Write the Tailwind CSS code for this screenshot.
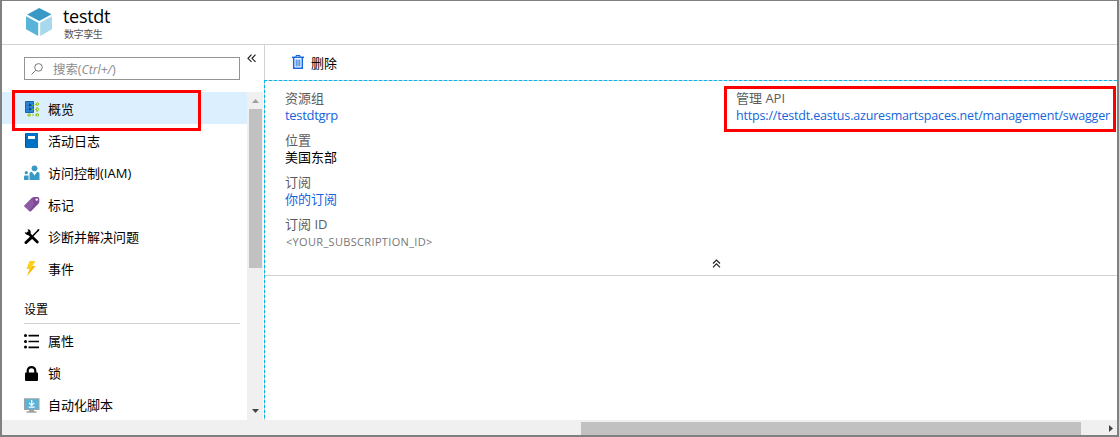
<!DOCTYPE html>
<html lang="zh-CN">
<head>
<meta charset="utf-8">
<title>testdt</title>
<script src="https://cdn.jsdelivr.net/npm/@tailwindcss/browser@4"></script>
</head>
<body class="bg-white">
<div class="relative w-[1119px] h-[437px] overflow-hidden border-2 border-t-1 border-[#808080] flex flex-col font-['Open_Sans','Noto_Sans_CJK_SC',sans-serif] text-[13px] leading-[17px] text-black whitespace-nowrap">
  <header class="h-11 shrink-0 border-b border-[#d2d2d2] flex pl-6">
    <svg class="w-[27px] h-7 mt-[7px] shrink-0" viewBox="0 0 27 28"><path fill="#3999c6" d="M13.2 0 25.500 6.200 13.200 13 1.200 6.400z"/><path fill="#59b4d9" d="M0 8.200 12.200 14.700V28L0 21.300z"/><path fill="#a8d8eb" d="M14.200 14.700 26 8.200v13.100L14.200 28z"/></svg>
    <div class="ml-[10px] pt-1">
      <div class="text-[18px] leading-[22px] tracking-[-0.3px]"><span>testdt</span></div>
      <div class="text-[10px] leading-[14px] tracking-[-0.4px] text-[#555] pl-px"><span>数字孪生</span></div>
    </div>
  </header>
  <div class="flex h-[375px] shrink-0">
    <aside class="w-[262px] shrink-0 flex flex-col">
      <div class="h-[47px] shrink-0 flex pl-[22px]">
        <div class="mt-3 w-[216px] h-[23px] border border-[#949494] flex items-center pl-[6px] text-[12.5px] text-[#8c8c8c]">
          <svg class="w-3 h-3" viewBox="0 0 12 12" fill="none" stroke="#777" stroke-width="1"><circle cx="7.500" cy="4.400" r="3.800"/><path d="M4.800 7.200.5 11.500"/></svg>
          <span class="ml-[10px] pt-px tracking-[-0.1px]">搜索(<i>Ctrl+/</i>)</span>
        </div>
        <svg class="w-[10px] h-[9px] mt-[9px] ml-[7px]" viewBox="0 0 10 9" fill="none" stroke="#222" stroke-width="1.200"><path d="M4.500.7 1 4.300l3.500 3.600M8.500.7 5 4.300l3.500 3.600"/></svg>
      </div>
      <div class="flex flex-1 min-h-0">
        <nav class="w-[245px] flex flex-col">
          <div class="h-8 shrink-0 bg-[#dceffe] flex items-center pl-[22px] gap-2 pt-[2px]">
            <svg class="w-4 h-4" viewBox="0 0 16 16"><path fill="#2a84d8" stroke="#1565b5" d="M1.500.5h8v11h-8z"/><path d="M2 4.500h7M2 8.500h7M5.500 1v10" stroke="#1d6cba" stroke-width=".8"/><path fill="#15457c" d="M5 3h2v2H5zM5 7h2v2H5z"/><g stroke="#7fba00" fill="#e4f5c0" stroke-width=".9"><path fill="none" stroke-dasharray="2 1" d="M5 14h8M13 3v11M8 4.500l5-1.500M8 8.500h5"/><circle cx="13.500" cy="3" r="1.200"/><circle cx="13.500" cy="8.500" r="1.200"/><circle cx="13.500" cy="14" r="1.200"/><circle cx="5" cy="14" r="1.200"/></g></svg>
            <span>概览</span>
          </div>
          <div class="h-8 shrink-0 flex items-center pl-[22px] gap-2 pt-[2px]">
            <svg class="w-4 h-4" viewBox="0 0 16 16"><path fill="#0072c6" d="M2 0h12v15H2q-1 0-1-1V1q0-1 1-1z"/><path fill="#005291" d="M1 1h1v13H1z"/><path fill="#fff" d="M4 3h7v3H4z"/></svg>
            <span>活动日志</span>
          </div>
          <div class="h-8 shrink-0 flex items-center pl-[22px] gap-2 pt-[2px]">
            <svg class="w-4 h-4" viewBox="0 0 16 16" fill="#3999c6"><circle cx="10.500" cy="3.300" r="2.900"/><path d="M5.500 15V8.500Q5.500 7 7 7h1l2.500 3.500L13 7h1q1.500 0 1.500 1.500V15z"/><circle cx="2.300" cy="7.700" r="1.600"/><path d="M0 15v-3.500Q0 10.500 1 10.500h3.500V15z"/></svg>
            <span>访问控制(IAM)</span>
          </div>
          <div class="h-8 shrink-0 flex items-center pl-[22px] gap-2 pt-[2px]">
            <svg class="w-4 h-4" viewBox="0 0 16 16"><path fill="#804998" d="M.4 8.500 8 .8Q9 0 10.500 0h3q1.800 0 1.800 1.800v3q0 1-.9 2L7 14.200q-.8.700-1.500 0L.400 9.500q-.5-.5 0-1z"/><path fill="#9b6cb0" d="M.4 8.500 8 .8 10 7l-5 7z" opacity=".5"/><circle cx="12.700" cy="2.600" r="1.200" fill="#fff"/></svg>
            <span>标记</span>
          </div>
          <div class="h-8 shrink-0 flex items-center pl-[22px] gap-2 pt-[2px]">
            <svg class="w-4 h-4" viewBox="0 0 16 16"><path d="M4 4 13.300 13" stroke="#000" stroke-width="2.800" stroke-linecap="round"/><path d="M3.500.3Q6.800.3 6.800 3.700 6 6.500 3.300 6 1 5.500.7 3L3 4.100 4.500 2.500z"/><path d="M14.500 1 8 7.800" stroke="#000" stroke-width="1.500"/><path d="M7 8.800 2 13.500" stroke="#000" stroke-width="3" stroke-linecap="round"/><path d="m13 1 2-1 .5.500-1 2z"/></svg>
            <span>诊断并解决问题</span>
          </div>
          <div class="h-8 shrink-0 flex items-center pl-[22px] gap-2 pt-[2px]">
            <svg class="w-4 h-4" viewBox="0 0 16 16"><path fill="#fcd116" d="M5.500 0h6L8.300 5H11.500L3 15 5.500 8H2.500z"/><path fill="#ff9f0a" d="M9 5h2.500L3 15l1.500-3.500z" opacity=".65"/></svg>
            <span>事件</span>
          </div>
          <div class="h-10 shrink-0 w-[216px] ml-[22px] border-b border-[#d0d0d0] text-[12px] leading-[17px] pt-[17px]"><span>设置</span></div>
          <div class="h-8 shrink-0 flex items-center pl-[22px] gap-2 pt-[3px]">
            <svg class="w-4 h-4" viewBox="0 0 16 16"><path stroke="#000" stroke-width="1.700" d="M4.500 1.700H15M4.500 7.500H15M4.500 13.300H15"/><circle cx="1.500" cy="1.500" r="1.500"/><circle cx="1.500" cy="7.500" r="1.500"/><circle cx="1.500" cy="13" r="1.500"/></svg>
            <span>属性</span>
          </div>
          <div class="h-8 shrink-0 flex items-center pl-[22px] gap-2 pt-[3px]">
            <svg class="w-4 h-4" viewBox="0 0 16 16"><rect x="1" y="6.500" width="13" height="8.500" rx="1"/><path d="M3.700 7V4.700a3.800 3.600 0 0 1 7.600 0V7" fill="none" stroke="#000" stroke-width="2.200"/></svg>
            <span>锁</span>
          </div>
          <div class="h-8 shrink-0 flex items-center pl-[22px] gap-2 pt-[3px]">
            <svg class="w-4 h-4" viewBox="0 0 16 16"><path fill="#a0a1a2" d="M0 .3h15.500v11.700H0zM5 12h5v1.300h2.500v1.500H2.500v-1.500H5z"/><path fill="#59b4d9" d="M1 1.300h13.500v9.700H1z"/><path d="M7.700 2v5M5.200 4.800l2.500 2.500 2.500-2.500M4.700 9.200h6" stroke="#fff" stroke-width="1.200" fill="none"/></svg>
            <span>自动化脚本</span>
          </div>
        </nav>
        <div class="w-4 bg-[#f0f0f0] flex flex-col items-center">
          <svg class="w-[7px] h-1 mt-[7px] shrink-0" viewBox="0 0 7 4"><path fill="#a0a0a0" d="M3.500 0 7 4H0z"/></svg>
          <div class="w-[13px] h-[159px] mt-[6px] bg-[#c1c1c1]"></div>
          <svg class="w-[7px] h-1 mt-auto mb-[7px] shrink-0" viewBox="0 0 7 4"><path fill="#444" d="M3.500 4 7 0H0z"/></svg>
        </div>
      </div>
    </aside>
    <main class="flex-1 min-w-0 flex flex-col">
      <div class="h-[35px] shrink-0 border-l border-[#d2d2d2] flex pl-[27px]">
        <svg class="w-3 h-[14px] mt-[10px]" viewBox="0 0 12 14" fill="none" stroke="#1667e0"><path stroke-width="1.500" d="M0 2.300h12"/><path d="M4 2V.5h4V2"/><path stroke-width="1.500" d="M1.700 3v10.200h8.600V3"/><path d="M4.200 4.500v7M6 4.500v7M7.800 4.500v7"/></svg>
        <span class="ml-[7px] mt-[10px]">删除</span>
      </div>
      <div class="flex-1 flex flex-col pt-px pl-px bg-[repeating-linear-gradient(90deg,#00b8ec_0_3px,#b9ccd4_3px_5px),repeating-linear-gradient(180deg,#00b8ec_0_3px,#b9ccd4_3px_5px)] bg-[length:100%_1px,1px_100%] bg-no-repeat">
        <div class="h-[195px] shrink-0 border-b border-[#d2d2d2] flex flex-col">
          <div class="flex h-[178px] pt-[9px] pl-5 text-[#5c5c5c]">
            <div class="w-[451px] shrink-0 flex flex-col gap-2">
              <div class="flex flex-col"><span>资源组</span><span class="text-[#1565dc] text-[13px] tracking-[-0.3px]">testdtgrp</span></div>
              <div class="flex flex-col"><span>位置</span><span class="text-black">美国东部</span></div>
              <div class="flex flex-col"><span>订阅</span><span class="text-[#1565dc]">你的订阅</span></div>
              <div class="flex flex-col"><span>订阅 ID</span><span class="text-[11px] tracking-[0.33px] text-[#777] pl-px">&lt;YOUR_SUBSCRIPTION_ID&gt;</span></div>
            </div>
            <div class="flex flex-col">
              <span>管理 API</span>
              <span class="text-[#1565dc] text-[12.5px] tracking-[-0.18px]">https://testdt.eastus.azuresmartspaces.net/management/swagger</span>
            </div>
          </div>
          <svg class="w-[9px] h-[9px] self-center mr-[-50px]" viewBox="0 0 9 9" fill="none" stroke="#222" stroke-width="1.200"><path d="M1 4.500 4.500 1 8 4.500M1 8.300l3.500-3.500L8 8.300"/></svg>
        </div>
      </div>
    </main>
  </div>
  <div class="h-[15px] shrink-0 bg-[#f0f0f0] flex items-center">
    <div class="ml-[579px] mt-[2px] w-[500px] h-[13px] bg-[#c1c1c1]"></div>
    <svg class="w-1 h-[7px] ml-7 mt-[2px]" viewBox="0 0 4 7"><path fill="#444" d="M0 0 4 3.500 0 7z"/></svg>
  </div>
  <div class="absolute left-[10px] top-[89px] w-[189px] h-[41px] border-3 border-[#f00]"></div>
  <div class="absolute left-[722px] top-[85px] w-[392px] h-[46px] border-3 border-[#f00]"></div>
</div>
</body>
</html>
